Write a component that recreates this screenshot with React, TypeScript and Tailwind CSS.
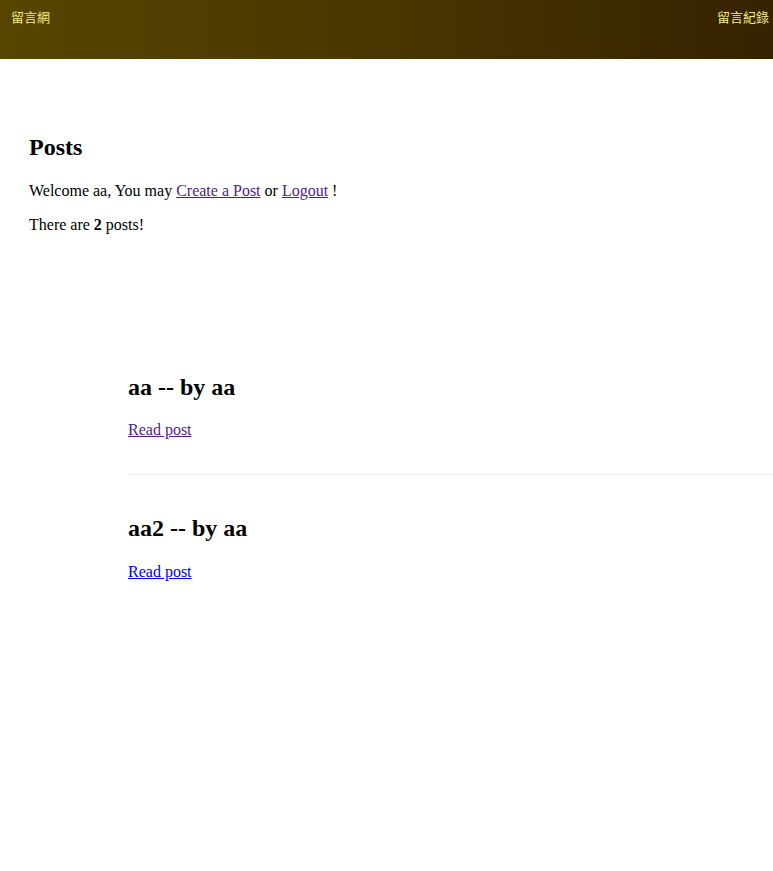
import React from 'react'

type Post = {
  title: string;
  author: string;
  visited: boolean;
}

const posts: Post[] = [
  { title: 'aa', author: 'aa', visited: true },
  { title: 'aa2', author: 'aa', visited: false },
]

const serif = "font-['Liberation_Serif',_'Times_New_Roman',_serif]"

const PostItem = ({ post, first, last }: { post: Post; first: boolean; last: boolean }) => {
  return (
    <li className={`${first ? 'pt-[20px]' : 'pt-[37px]'} ${last ? '' : 'border-b border-[#eeeeee] pb-[35px]'}`}>
      <h2 className="text-[24px] font-bold leading-[28px] mt-[2px]">
        {post.title} -- by {post.author}
      </h2>
      <p className={`${first ? 'mt-[20px]' : 'mt-[21px]'} text-[16px] leading-[18px]`}>
        <a
          href="#"
          className={`underline ${post.visited ? 'text-[#551a8b]' : 'text-[#0000ee]'}`}
        >
          Read post
        </a>
      </p>
    </li>
  )
}

export default function App() {
  return (
    <div className={`min-h-[871px] bg-white text-black ${serif}`}>
      <header className="h-[59px] bg-gradient-to-r from-[#574500] via-[#4a3500] to-[#352200] flex justify-between items-start px-[11px] pt-[8px] pr-[4px]">
        <a href="#" className="text-[13px] leading-[17px] text-[#f6e88c] font-['Noto_Sans_CJK_TC',_sans-serif]">留言網</a>
        <a href="#" className="text-[13px] leading-[17px] text-[#f6e88c] font-['Noto_Sans_CJK_TC',_sans-serif]">留言紀錄</a>
      </header>

      <main className="pl-[29px] pt-[74px]">
        <h1 className="text-[24px] font-bold leading-[28px]">Posts</h1>
        <p className="mt-[21px] text-[16px] leading-[18px]">
          Welcome aa, You may{' '}
          <a href="#" className="underline text-[#551a8b]">Create a Post</a> or{' '}
          <a href="#" className="underline text-[#551a8b]">Logout</a> !
        </p>
        <p className="mt-[16px] text-[16px] leading-[18px]">
          There are <b>2</b> posts!
        </p>

        <ul className="ml-[99px] mt-[117px]">
          {posts.map((p, i) => (
            <PostItem key={p.title} post={p} first={i === 0} last={i === posts.length - 1} />
          ))}
        </ul>
      </main>
    </div>
  )
}
